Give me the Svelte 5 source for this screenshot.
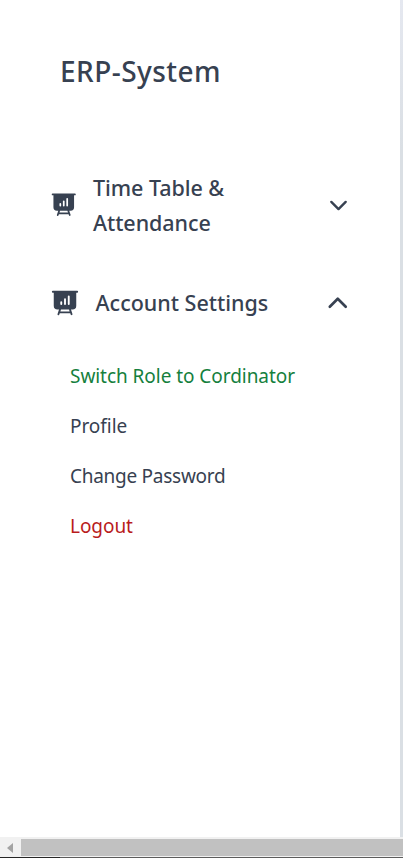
<script>
  let sections = $state([
    { id: 'time', title: 'Time Table & Attendance', open: false, items: [] },
    {
      id: 'account',
      title: 'Account Settings',
      open: true,
      items: [
        { label: 'Switch Role to Cordinator', tone: 'green' },
        { label: 'Profile', tone: 'plain' },
        { label: 'Change Password', tone: 'password' },
        { label: 'Logout', tone: 'red' }
      ]
    }
  ]);
</script>

<div class="page">
  <div class="body">
    <aside class="sidebar">
      <h1>ERP-System</h1>
      <nav>
        {#each sections as section (section.id)}
          <section class={section.id}>
            <button class="head" onclick={() => (section.open = !section.open)}>
              <svg class="board" viewBox="0 0 24 24" fill="currentColor" fill-rule="evenodd">
                <path d="M2.25 2.25a.75.75 0 000 1.5H3v10.5a3 3 0 003 3h1.21l-1.172 3.513a.75.75 0 001.424.474l.329-.987h8.418l.33.987a.75.75 0 001.422-.474l-1.17-3.513H18a3 3 0 003-3V3.75h.75a.75.75 0 000-1.5H2.25zm6.04 16.5l.5-1.5h6.42l.5 1.5H8.29zm7.46-12a.75.75 0 00-1.5 0v6a.75.75 0 001.5 0v-6zm-3 2.25a.75.75 0 00-1.5 0v3.75a.75.75 0 001.5 0V9zm-3 2.25a.75.75 0 00-1.5 0v1.5a.75.75 0 001.5 0v-1.5z" />
              </svg>
              <span class="title">{section.title}</span>
              <svg class="chevron" viewBox="0 0 24 24" fill="none" stroke="currentColor" stroke-width="2.5" stroke-linecap="round" stroke-linejoin="round">
                <path d={section.open ? 'M4.5 15.75l7.5-7.5 7.5 7.5' : 'M19.5 8.25l-7.5 7.5-7.5-7.5'} />
              </svg>
            </button>
            {#if section.open}
              <ul>
                {#each section.items as item}
                  <li class={item.tone}>{item.label}</li>
                {/each}
              </ul>
            {/if}
          </section>
        {/each}
      </nav>
    </aside>
    <div class="edge"></div>
  </div>
  <div class="scrollbar">
    <div class="arrow"><svg viewBox="0 0 6 10"><path d="M6 0v10L0 5z" fill="#a3a3a3" /></svg></div>
    <div class="thumb"></div>
  </div>
  <div class="taskline"></div>
</div>

<style>
  .page {
    width: 403px;
    height: 858px;
    display: flex;
    flex-direction: column;
    overflow: hidden;
    background: #fff;
    color: #374151;
    font-family: "Noto Sans", "Open Sans", sans-serif;
  }
  .body { flex: 1; display: flex; }
  .sidebar { flex: 1; padding-top: 51px; }
  .edge { width: 3px; background: linear-gradient(#e5e8f0, #dadfe4 150px); }
  h1 {
    margin: 0 0 0 60px;
    font-size: 28px;
    line-height: 40px;
    font-weight: 500;
    letter-spacing: 0.45px;
  }
  .head {
    display: flex;
    align-items: center;
    width: 100%;
    border: 0;
    padding: 0;
    background: none;
    color: inherit;
    font: inherit;
    font-size: 21.5px;
    font-weight: 500;
    line-height: 35px;
    text-align: left;
  }
  svg { display: block; flex: none; }
  .title { width: 190px; }
  .chevron { margin-left: auto; }
  .time { margin-top: 79px; }
  .time .board { width: 27.5px; height: 27.5px; margin: 0 15.5px 0 50px; }
  .time .title { letter-spacing: -0.06px; }
  .time .chevron { width: 23px; height: 23px; margin-right: 50px; }
  .account { margin-top: 45px; }
  .account .board { width: 30px; height: 30px; margin: 0 15.5px 0 50px; }
  .account .chevron { width: 25.5px; height: 25.5px; margin-right: 49.5px; }
  ul { list-style: none; margin: 31px 0 0 70px; padding: 0; }
  li { height: 50px; line-height: 50px; font-size: 19px; font-weight: 400; letter-spacing: -0.05px; }
  .green { color: #15803d; }
  .password { letter-spacing: -0.27px; }
  .red { color: #b91c1c; }
  .scrollbar {
    height: 20px;
    box-sizing: border-box;
    display: flex;
    padding: 2px 0 1px;
    background: #f1f1f1;
  }
  .arrow { width: 21px; display: flex; align-items: center; }
  .arrow svg { width: 6px; height: 10px; margin-left: 7px; }
  .thumb { flex: 1; background: #c1c1c1; }
  .taskline { height: 1px; background: linear-gradient(90deg, #262626 60px, #5c5c5c 60px); }
</style>
